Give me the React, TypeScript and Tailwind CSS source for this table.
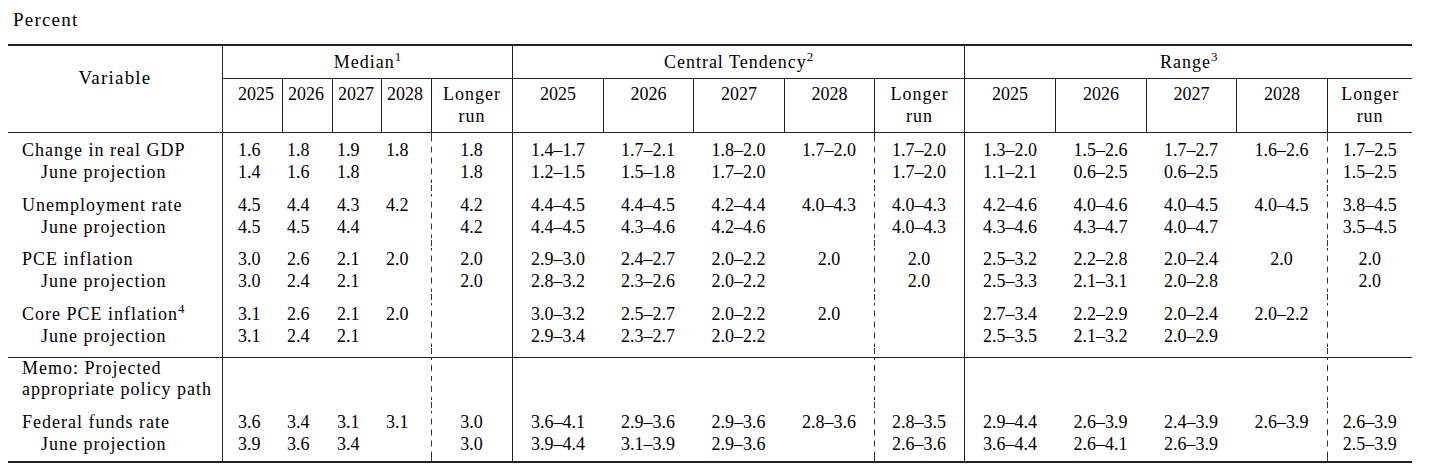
const LINE = "border-[#222]";
const DASH =
  "bg-[linear-gradient(to_bottom,transparent_2px,#333_2px,#333_8px,transparent_8px)] bg-[length:1px_11px] bg-repeat-y bg-left";

const widths = [
  "w-[214px]",
  "w-[60px]",
  "w-[50px]",
  "w-[49px]",
  "w-[50px]",
  "w-[81px]",
  "w-[91px]",
  "w-[90px]",
  "w-[91px]",
  "w-[90px]",
  "w-[90px]",
  "w-[91px]",
  "w-[91px]",
  "w-[90px]",
  "w-[91px]",
  "w-[85px]",
];

type Row =
  | { kind: "gap"; h: string; last?: boolean }
  | { kind: "line"; label: React.ReactNode; sub?: boolean; v?: string[]; rule?: boolean; lh?: string };

const E = ["", "", "", "", "", "", "", "", "", "", "", "", "", "", ""];

const body: Row[] = [
  { kind: "gap", h: "h-[6px]" },
  {
    kind: "line",
    label: "Change in real GDP",
    v: ["1.6", "1.8", "1.9", "1.8", "1.8", "1.4–1.7", "1.7–2.1", "1.8–2.0", "1.7–2.0", "1.7–2.0", "1.3–2.0", "1.5–2.6", "1.7–2.7", "1.6–2.6", "1.7–2.5"],
  },
  {
    kind: "line",
    sub: true,
    label: "June projection",
    v: ["1.4", "1.6", "1.8", "", "1.8", "1.2–1.5", "1.5–1.8", "1.7–2.0", "", "1.7–2.0", "1.1–2.1", "0.6–2.5", "0.6–2.5", "", "1.5–2.5"],
  },
  { kind: "gap", h: "h-[11px]" },
  {
    kind: "line",
    label: "Unemployment rate",
    v: ["4.5", "4.4", "4.3", "4.2", "4.2", "4.4–4.5", "4.4–4.5", "4.2–4.4", "4.0–4.3", "4.0–4.3", "4.2–4.6", "4.0–4.6", "4.0–4.5", "4.0–4.5", "3.8–4.5"],
  },
  {
    kind: "line",
    sub: true,
    label: "June projection",
    v: ["4.5", "4.5", "4.4", "", "4.2", "4.4–4.5", "4.3–4.6", "4.2–4.6", "", "4.0–4.3", "4.3–4.6", "4.3–4.7", "4.0–4.7", "", "3.5–4.5"],
  },
  { kind: "gap", h: "h-[10px]" },
  {
    kind: "line",
    label: "PCE inflation",
    v: ["3.0", "2.6", "2.1", "2.0", "2.0", "2.9–3.0", "2.4–2.7", "2.0–2.2", "2.0", "2.0", "2.5–3.2", "2.2–2.8", "2.0–2.4", "2.0", "2.0"],
  },
  {
    kind: "line",
    sub: true,
    label: "June projection",
    v: ["3.0", "2.4", "2.1", "", "2.0", "2.8–3.2", "2.3–2.6", "2.0–2.2", "", "2.0", "2.5–3.3", "2.1–3.1", "2.0–2.8", "", "2.0"],
  },
  { kind: "gap", h: "h-[11px]" },
  {
    kind: "line",
    label: (
      <>
        Core PCE inflation<sup className="text-[13px] -top-[7px] tracking-normal">4</sup>
      </>
    ),
    v: ["3.1", "2.6", "2.1", "2.0", "", "3.0–3.2", "2.5–2.7", "2.0–2.2", "2.0", "", "2.7–3.4", "2.2–2.9", "2.0–2.4", "2.0–2.2", ""],
  },
  {
    kind: "line",
    sub: true,
    label: "June projection",
    v: ["3.1", "2.4", "2.1", "", "", "2.9–3.4", "2.3–2.7", "2.0–2.2", "", "", "2.5–3.5", "2.1–3.2", "2.0–2.9", "", ""],
  },
  { kind: "gap", h: "h-[10px]" },
  { kind: "line", label: "Memo: Projected", rule: true, lh: "leading-[21px]" },
  { kind: "line", label: "appropriate policy path", lh: "leading-[21px]" },
  { kind: "gap", h: "h-[11px]" },
  {
    kind: "line",
    label: "Federal funds rate",
    v: ["3.6", "3.4", "3.1", "3.1", "3.0", "3.6–4.1", "2.9–3.6", "2.9–3.6", "2.8–3.6", "2.8–3.5", "2.9–4.4", "2.6–3.9", "2.4–3.9", "2.6–3.9", "2.6–3.9"],
  },
  {
    kind: "line",
    sub: true,
    label: "June projection",
    v: ["3.9", "3.6", "3.4", "", "3.0", "3.9–4.4", "3.1–3.9", "2.9–3.6", "", "2.6–3.6", "3.6–4.4", "2.6–4.1", "2.6–3.9", "", "2.5–3.9"],
  },
  { kind: "gap", h: "h-[8px]", last: true },
];

function edge(i: number) {
  if (i === 0 || i === 5 || i === 10) return `border-l ${LINE}`;
  if (i === 4 || i === 9 || i === 14) return DASH;
  return "";
}

function align(i: number) {
  if (i === 0) return "text-left pl-[15px]";
  if (i < 4) return "text-left pl-[5px]";
  return "text-center";
}

const years = ["2025", "2026", "2027", "2028"];

export default function App() {
  return (
    <div className="w-[1429px] h-[472px] bg-white text-black font-['Liberation_Serif',serif] text-[18px] leading-[22px]">
      <div className="pl-[13px] pt-[9px] text-[19px] tracking-[1.2px]">Percent</div>

      <table className="mt-[13px] ml-[8px] w-[1404px] table-fixed border-separate border-spacing-0">
        <colgroup>
          {widths.map((w, i) => (
            <col key={i} className={w} />
          ))}
        </colgroup>
        <thead>
          <tr className="h-[35px]">
            <th
              rowSpan={2}
              className={`border-t-2 border-b ${LINE} align-top pt-[21px] font-normal text-[19px] tracking-[1.2px]`}
            >
              Variable
            </th>
            {["Median", "Central Tendency", "Range"].map((g, k) => (
              <th
                key={g}
                colSpan={5}
                className={`border-t-2 border-b border-l ${LINE} align-middle font-normal tracking-[1px]`}
              >
                {g}
                <sup className="text-[13px] -top-[7px] tracking-normal">{k + 1}</sup>
              </th>
            ))}
          </tr>
          <tr className="h-[54px]">
            {Array.from({ length: 15 }).map((_, i) => {
              const longer = i % 5 === 4;
              return (
                <th
                  key={i}
                  className={`border-b border-l ${LINE} align-top pt-[4px] font-normal ${
                    longer ? "text-center tracking-[1px]" : align(i)
                  }`}
                >
                  {longer ? (
                    <>
                      Longer
                      <br />
                      run
                    </>
                  ) : (
                    years[i % 5]
                  )}
                </th>
              );
            })}
          </tr>
        </thead>
        <tbody>
          {body.map((r, ri) => {
            if (r.kind === "gap") {
              const b = r.last ? `border-b-2 ${LINE}` : "";
              return (
                <tr key={ri} className={r.h}>
                  <td className={b} />
                  {E.map((_, i) => (
                    <td key={i} className={`${edge(i)} ${b}`} />
                  ))}
                </tr>
              );
            }
            const t = r.rule ? `border-t ${LINE}` : "";
            const lh = r.lh ?? "leading-[22px]";
            const vals = r.v ?? E;
            return (
              <tr key={ri}>
                <td
                  className={`${t} ${lh} whitespace-nowrap tracking-[1px] ${
                    r.sub ? "pl-[33px]" : "pl-[14px]"
                  }`}
                >
                  {r.label}
                </td>
                {vals.map((v, i) => (
                  <td key={i} className={`${edge(i)} ${t} ${lh} ${align(i)}`}>
                    {v}
                  </td>
                ))}
              </tr>
            );
          })}
        </tbody>
      </table>
    </div>
  );
}
